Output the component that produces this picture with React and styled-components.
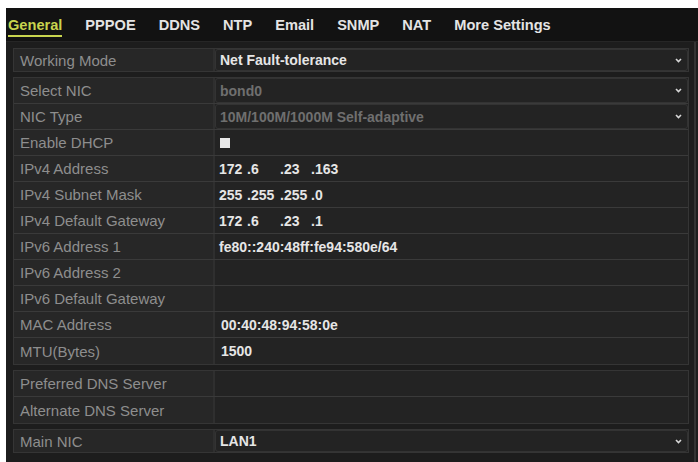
import styled, { createGlobalStyle } from 'styled-components'

const Global = createGlobalStyle`
body{margin:0;background:#fff;font-family:"Liberation Sans",Arial,sans-serif;}
`

const tabs = ['General','PPPOE','DDNS','NTP','Email','SNMP','NAT','More Settings']

const groups = [
  [{ l:'Working Mode', v:'Net Fault-tolerance', drop:true }],
  [
    { l:'Select NIC', v:'bond0', dim:true, drop:true },
    { l:'NIC Type', v:'10M/100M/1000M Self-adaptive', dim:true, drop:true },
    { l:'Enable DHCP', check:true },
    { l:'IPv4 Address', ip:['172','.6','.23','.163'] },
    { l:'IPv4 Subnet Mask', ip:['255','.255','.255','.0'] },
    { l:'IPv4 Default Gateway', ip:['172','.6','.23','.1'] },
    { l:'IPv6 Address 1', v:'fe80::240:48ff:fe94:580e/64' },
    { l:'IPv6 Address 2', v:'' },
    { l:'IPv6 Default Gateway', v:'' },
    { l:'MAC Address', v:'00:40:48:94:58:0e', pad:true },
    { l:'MTU(Bytes)', v:'1500', pad:true },
  ],
  [
    { l:'Preferred DNS Server', v:'' },
    { l:'Alternate DNS Server', v:'' },
  ],
  [{ l:'Main NIC', v:'LAN1', drop:true }],
]

const octetW = [28, 33, 31, 40]

function Chevron(){
  return (
    <svg width="7" height="5" viewBox="0 0 7 5">
      <path d="M1 1 L3.5 3.5 L6 1" stroke="#d8d8d8" strokeWidth="1.6" fill="none" />
    </svg>
  )
}

export default function App(){
  return (
    <>
      <Global />
      <Panel>
        <TabBar>
          {tabs.map((t,i)=><Tab key={t} active={i==0}>{t}</Tab>)}
        </TabBar>
        <Body>
          {groups.map((g,gi)=>(
            <Group key={gi}>
              {g.map(r=>(
                <Row key={r.l} tall={gi==1||gi==2}>
                  <Label>{r.l}</Label>
                  <Value dim={r.dim} pad={r.pad} boxed={r.drop}>
                    {r.check ? <Check/> :
                     r.ip ? r.ip.map((o,k)=><Octet key={k} style={{width:octetW[k]}}>{o}</Octet>) :
                     <span>{r.v}</span>}
                    {r.drop ? <Drop><Chevron/></Drop> : null}
                  </Value>
                </Row>
              ))}
            </Group>
          ))}
        </Body>
      </Panel>
    </>
  )
}

const Panel=styled.div`
margin:8px 0 0 6px;
height:454px;
background:#1d1d1d;
display:flex;flex-direction:column;
overflow:hidden;
`
const TabBar=styled.div`
height:34px;
background:#121212;
display:flex;align-items:center;
gap:23px;
padding:0 0 0 2px;
border-bottom:1px solid #262626;
box-sizing:border-box;
`
const Tab=styled.div`
font-size:14.6px;font-weight:700;
color:${p=>p.active?'#c8d44e':'#e4e4e4'};
padding-bottom:2px;
margin-top:4px;
border-bottom:2px solid ${p=>p.active?'#c8d44e':'transparent'};
`
const Body=styled.div`
flex:1;
display:flex;flex-direction:column;
gap:5px;
padding:6px 0 0 7px;
margin-right:2px;
border-right:2px solid #333;
`
const Group=styled.div`
width:674px;
border:1px solid #353535;
background:#222;
display:flex;flex-direction:column;
`
const Row=styled.div`
display:grid;
grid-template-columns:201px 1fr;
height:${p=>p.tall?'26px':'22px'};
box-sizing:border-box;
border-bottom:1px solid #3a3a3a;
&:last-child{border-bottom:none;}
`
const Label=styled.div`
display:flex;align-items:center;
padding-left:6px;
font-size:15px;
color:#8e8e8e;
background:#272727;
border-right:2px solid #2f2f2f;
white-space:nowrap;
`
const Value=styled.div`
display:flex;align-items:center;
padding-left:${p=>p.pad?'6px':'4px'};
font-size:14px;font-weight:700;
color:${p=>p.dim?'#6f6f6f':'#e6e6e6'};
background:#232323;
border:${p=>p.boxed?'1px solid #333':'none'};
border-radius:${p=>p.boxed?'3px':'0'};
white-space:pre;
`
const Octet=styled.span`
display:inline-block;
`
const Drop=styled.span`
margin-left:auto;
margin-right:5px;
display:flex;align-items:center;
`
const Check=styled.span`
width:10px;height:10px;
margin-left:1px;
background:#e8e8e8;
`
